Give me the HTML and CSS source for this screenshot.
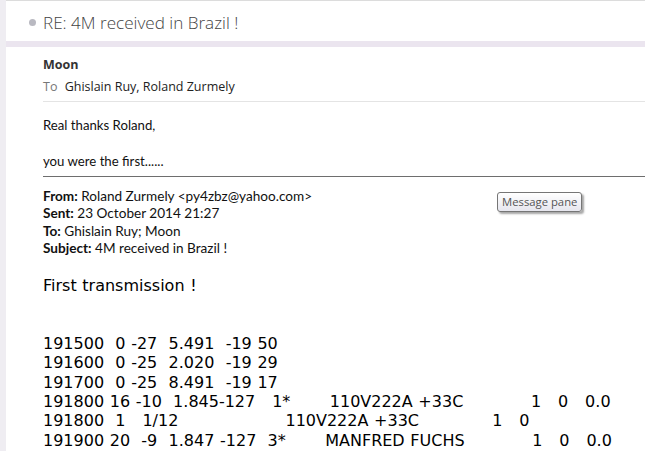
FILE: index.html
```html
<!DOCTYPE html>
<html lang="en">
<head>
  <meta charset="UTF-8">
  <title>RE: 4M received in Brazil !</title>
  <link rel="stylesheet" href="styles.css">
</head>
<body>
  <div class="rail"></div>
  <div class="pane">
    <div class="subject">
      <span class="dot"></span>
      <span>RE: 4M received in Brazil !</span>
    </div>
    <div class="band"></div>

    <div class="message">
      <div class="sender">Moon</div>
      <div class="recipients"><span class="to">To</span> Ghislain Ruy, Roland Zurmely</div>

      <div class="body">
        <p>Real thanks Roland,</p>
        <p>&nbsp;</p>
        <p>you were the first......</p>

        <div class="quote-head">
          <p><b>From:</b> Roland Zurmely &lt;py4zbz@yahoo.com&gt;</p>
          <p><b>Sent:</b> 23 October 2014 21:27</p>
          <p><b>To:</b> Ghislain Ruy; Moon</p>
          <p><b>Subject:</b> 4M received in Brazil !</p>
          <div class="tooltip">Message pane</div>
        </div>

        <div class="plain">
          <p>First transmission !</p>
          <p>&nbsp;</p>
          <p>&nbsp;</p>
          <p>191500  0 -27  5.491  -19 50</p>
          <p>191600  0 -25  2.020  -19 29</p>
          <p>191700  0 -25  8.491  -19 17</p>
          <p>191800 16 -10  1.845-127   1*       110V222A +33C            1   0   0.0</p>
          <p>191800  1   1/12                   110V222A +33C             1   0</p>
          <p>191900 20  -9  1.847 -127  3*       MANFRED FUCHS            1   0   0.0</p>
        </div>
      </div>
    </div>
  </div>
</body>
</html>
```

FILE: styles.css
```css
html, body {
  margin: 0;
  height: 100%;
  overflow: hidden;
}
body {
  display: flex;
  background: #fff;
  font-family: "Open Sans", sans-serif;
  color: #222;
}
p {
  margin: 0;
}
.rail {
  width: 6px;
  flex: none;
  background: #efedf2;
}
.pane {
  flex: 1;
  border-top: 1px solid #dcdcdc;
  margin-right: 1px;
}
.subject {
  box-sizing: border-box;
  height: 40px;
  padding: 3px 0 0 23px;
  display: flex;
  align-items: center;
  gap: 7px;
  font-size: 17.1px;
  font-weight: 300;
  color: #444;
}
.dot {
  width: 7px;
  height: 7px;
  border-radius: 50%;
  background: #b9b9c1;
}
.band {
  height: 6px;
  background: #ebe5ef;
}
.message {
  padding-left: 37px;
}
.sender {
  margin-top: 9px;
  font-size: 12.5px;
  font-weight: 700;
  color: #333;
  line-height: 18px;
}
.recipients {
  font-size: 12.5px;
  line-height: 25px;
  color: #222;
  padding-bottom: 2px;
  border-bottom: 1px solid #e4e4e4;
}
.to {
  color: #777;
  margin-right: 4px;
}
.body {
  padding-top: 14px;
  font-family: "Lato", sans-serif;
  font-size: 13.2px;
  line-height: 18px;
  color: #111;
}
.quote-head {
  position: relative;
  margin-top: 6px;
  padding-top: 11px;
  border-top: 1px solid #6e6e6e;
  font-size: 13.6px;
  line-height: 17.3px;
}
.quote-head b {
  font-weight: 700;
}
.tooltip {
  position: absolute;
  left: 454px;
  top: 15px;
  padding: 0 4px 1px;
  font-family: "Open Sans", sans-serif;
  font-size: 11.3px;
  line-height: 17px;
  color: #555;
  background: linear-gradient(#fff, #e6e6ee);
  border: 1px solid #767676;
  border-radius: 3px;
  box-shadow: 2px 2px 2px rgba(0, 0, 0, 0.35);
}
.plain {
  margin-top: 19px;
  font-family: "DejaVu Sans", Verdana, sans-serif;
  font-size: 16px;
  line-height: 19.3px;
  word-spacing: 0.55px;
  color: #000;
}
.plain p {
  white-space: pre;
}
```
